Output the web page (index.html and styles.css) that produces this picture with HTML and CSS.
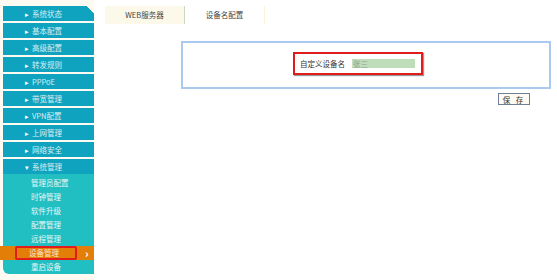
FILE: index.html
```html
<!DOCTYPE html>
<html lang="zh-CN">
<head>
    <meta charset="UTF-8">
    <title>设备名配置</title>
    <link rel="stylesheet" href="styles.css">
</head>
<body>
    <div class="page">
        <div class="sidebar">
            <div class="menu-item first"><span class="arrow">▸</span>系统状态</div>
            <div class="menu-item"><span class="arrow">▸</span>基本配置</div>
            <div class="menu-item"><span class="arrow">▸</span>高级配置</div>
            <div class="menu-item"><span class="arrow">▸</span>转发规则</div>
            <div class="menu-item"><span class="arrow">▸</span>PPPoE</div>
            <div class="menu-item"><span class="arrow">▸</span>带宽管理</div>
            <div class="menu-item"><span class="arrow">▸</span>VPN配置</div>
            <div class="menu-item"><span class="arrow">▸</span>上网管理</div>
            <div class="menu-item"><span class="arrow">▸</span>网络安全</div>
            <div class="menu-item open"><span class="arrow">▾</span>系统管理</div>
            <div class="submenu">
                <div class="sub-item">管理员配置</div>
                <div class="sub-item">时钟管理</div>
                <div class="sub-item">软件升级</div>
                <div class="sub-item">配置管理</div>
                <div class="sub-item">远程管理</div>
                <div class="sub-item active"><span class="mark">设备管理</span><span class="chev">›</span></div>
                <div class="sub-item">重启设备</div>
            </div>
        </div>
        <div class="main">
            <div class="tabs">
                <div class="tab">WEB服务器</div>
                <div class="tab current">设备名配置</div>
            </div>
            <div class="panel">
                <div class="field">
                    <label for="devName">自定义设备名</label>
                    <input type="text" id="devName" value="张三">
                </div>
            </div>
            <div class="actions">
                <button type="button">保 存</button>
            </div>
        </div>
    </div>
</body>
</html>
```

FILE: styles.css
```css
body {
    margin: 0;
    background: #ffffff;
    font-family: "Noto Sans CJK SC", "DejaVu Sans", sans-serif;
    font-size: 7.5px;
}
.page {
    display: flex;
    align-items: flex-start;
}
.sidebar {
    width: 91px;
    padding: 6px 0 0 3px;
    background: #fdfaf2;
    height: 274px;
}
.menu-item {
    height: 15px;
    line-height: 15px;
    margin-bottom: 2px;
    background: #10a3bf;
    color: #d7eff3;
    padding-left: 22px;
}
.menu-item.first {
    background: linear-gradient(225deg, #fdfaf2 0 5px, #10a3bf 5px);
}
.menu-item.open {
    margin-bottom: 0;
}
.arrow {
    display: inline-block;
    width: 7px;
    font-size: 7px;
    color: #ffffff;
}
.submenu {
    background: #22bfc2;
    border-bottom-left-radius: 6px;
    padding-top: 2px;
}
.sub-item {
    height: 14px;
    line-height: 14px;
    color: #e6f6f7;
    padding-left: 28px;
}
.sub-item.active {
    display: flex;
    align-items: center;
    background: #e37f09;
    margin-left: -3px;
    padding-left: 15px;
}
.mark {
    width: 46px;
    height: 10px;
    line-height: 10px;
    border: 2px solid #e21b1b;
    border-radius: 2px;
    padding-left: 12px;
    color: #fbe6cc;
}
.chev {
    margin-left: 8px;
    color: #ffffff;
    font-weight: bold;
    font-size: 11px;
    line-height: 10px;
}
.main {
    flex: 1;
    padding: 6px 6px 0 10px;
}
.tabs {
    display: flex;
    width: 160px;
    margin-left: 1px;
}
.tab {
    width: 80px;
    height: 18px;
    line-height: 18px;
    text-align: center;
    background: #fcf8ea;
    color: #444444;
    border-right: 1px solid #c9d7c4;
}
.tab.current {
    background: #ffffff;
    border-right: 1px solid #fcf3dc;
}
.panel {
    margin: 17px 0 0 77px;
    height: 44px;
    border: 2px solid #a9c9ee;
    display: flex;
    justify-content: center;
    align-items: center;
}
.field {
    display: flex;
    align-items: center;
    border: 2px solid #e01d1d;
    box-shadow: 1px 1px 1px #999999;
    padding: 4px 6px 4px 5px;
    margin-right: 16px;
    margin-top: -3px;
}
.field label {
    color: #333333;
    margin-right: 7px;
}
.field input {
    width: 61px;
    height: 9px;
    padding: 0 1px;
    border: none;
    background: #bfdcbb;
    color: #8a9a8a;
    font-family: inherit;
    font-size: 7.5px;
}
.actions {
    display: flex;
    justify-content: flex-end;
    margin-top: 4px;
    padding-right: 21px;
}
button {
    width: 32px;
    height: 12px;
    padding: 0;
    font-family: inherit;
    font-size: 7.5px;
    line-height: 9px;
    letter-spacing: 2px;
    background: #fdfbf3;
    border: 1px solid #6e7f96;
    color: #333333;
}
```
